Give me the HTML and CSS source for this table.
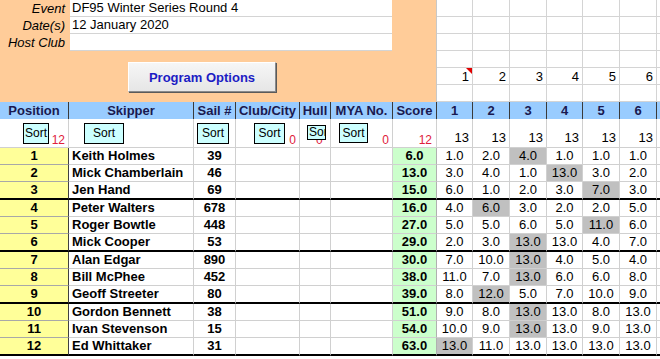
FILE: index.html
```html
<!DOCTYPE html>
<html>
<head>
<meta charset="utf-8">
<link rel="stylesheet" href="styles.css">
</head>
<body>
<div class="sheet">
  <div class="top">
    <div class="info">
      <div class="field"><span class="lbl">Event</span><span class="val">DF95 Winter Series Round 4</span></div>
      <div class="field"><span class="lbl">Date(s)</span><span class="val">12 January 2020</span></div>
      <div class="field"><span class="lbl">Host Club</span><span class="val"></span></div>
      <div class="btnrow"><button class="prog">Program Options</button></div>
    </div>
    <div class="topgrid">
      <div></div><div></div><div></div><div></div><div></div><div></div><div></div>
      <div></div><div></div><div></div><div></div><div></div><div></div><div></div>
      <div></div><div></div><div></div><div></div><div></div><div></div><div></div>
      <div></div><div></div><div></div><div></div><div></div><div></div><div></div>
      <div class="note">1<span class="flag"></span></div><div>2</div><div>3</div><div>4</div><div>5</div><div>6</div><div></div>
      <div></div><div></div><div></div><div></div><div></div><div></div><div></div>
    </div>
  </div>

  <div class="row head">
    <div>Position</div><div>Skipper</div><div>Sail #</div><div>Club/City</div><div>Hull</div><div>MYA No.</div><div>Score</div>
    <div>1</div><div>2</div><div>3</div><div>4</div><div>5</div><div>6</div><div></div>
  </div>

  <div class="row sortrow">
    <div class="pos-s"><button class="sort">Sort</button><span class="cnt">12</span></div>
    <div class="skp-s"><button class="sort">Sort</button></div>
    <div class="sail-s"><button class="sort">Sort</button></div>
    <div class="club-s"><button class="sort">Sort</button><span class="cnt">0</span></div>
    <div class="hull-s"><span class="cnt">0</span><span class="sort hullbtn">Sort</span></div>
    <div class="mya-s"><button class="sort">Sort</button><span class="cnt">0</span></div>
    <div class="score-s"><span class="cnt">12</span></div>
    <div class="tot">13</div><div class="tot">13</div><div class="tot">13</div><div class="tot">13</div><div class="tot">13</div><div class="tot">13</div><div></div>
  </div>

  <div class="row">
    <div class="pos">1</div><div class="name">Keith Holmes</div><div class="sail">39</div><div></div><div></div><div></div><div class="score">6.0</div>
    <div>1.0</div><div>2.0</div><div class="g">4.0</div><div>1.0</div><div>1.0</div><div>1.0</div><div></div>
  </div>
  <div class="row">
    <div class="pos">2</div><div class="name">Mick Chamberlain</div><div class="sail">46</div><div></div><div></div><div></div><div class="score">13.0</div>
    <div>3.0</div><div>4.0</div><div>1.0</div><div class="g">13.0</div><div>3.0</div><div>2.0</div><div></div>
  </div>
  <div class="row thick">
    <div class="pos">3</div><div class="name">Jen Hand</div><div class="sail">69</div><div></div><div></div><div></div><div class="score">15.0</div>
    <div>6.0</div><div>1.0</div><div>2.0</div><div>3.0</div><div class="g">7.0</div><div>3.0</div><div></div>
  </div>
  <div class="row">
    <div class="pos">4</div><div class="name">Peter Walters</div><div class="sail">678</div><div></div><div></div><div></div><div class="score">16.0</div>
    <div>4.0</div><div class="g">6.0</div><div>3.0</div><div>2.0</div><div>2.0</div><div>5.0</div><div></div>
  </div>
  <div class="row">
    <div class="pos">5</div><div class="name">Roger Bowtle</div><div class="sail">448</div><div></div><div></div><div></div><div class="score">27.0</div>
    <div>5.0</div><div>5.0</div><div>6.0</div><div>5.0</div><div class="g">11.0</div><div>6.0</div><div></div>
  </div>
  <div class="row thick">
    <div class="pos">6</div><div class="name">Mick Cooper</div><div class="sail">53</div><div></div><div></div><div></div><div class="score">29.0</div>
    <div>2.0</div><div>3.0</div><div class="g">13.0</div><div>13.0</div><div>4.0</div><div>7.0</div><div></div>
  </div>
  <div class="row">
    <div class="pos">7</div><div class="name">Alan Edgar</div><div class="sail">890</div><div></div><div></div><div></div><div class="score">30.0</div>
    <div>7.0</div><div>10.0</div><div class="g">13.0</div><div>4.0</div><div>5.0</div><div>4.0</div><div></div>
  </div>
  <div class="row">
    <div class="pos">8</div><div class="name">Bill McPhee</div><div class="sail">452</div><div></div><div></div><div></div><div class="score">38.0</div>
    <div>11.0</div><div>7.0</div><div class="g">13.0</div><div>6.0</div><div>6.0</div><div>8.0</div><div></div>
  </div>
  <div class="row thick">
    <div class="pos">9</div><div class="name">Geoff Streeter</div><div class="sail">80</div><div></div><div></div><div></div><div class="score">39.0</div>
    <div>8.0</div><div class="g">12.0</div><div>5.0</div><div>7.0</div><div>10.0</div><div>9.0</div><div></div>
  </div>
  <div class="row">
    <div class="pos">10</div><div class="name">Gordon Bennett</div><div class="sail">38</div><div></div><div></div><div></div><div class="score">51.0</div>
    <div>9.0</div><div>8.0</div><div class="g">13.0</div><div>13.0</div><div>8.0</div><div>13.0</div><div></div>
  </div>
  <div class="row">
    <div class="pos">11</div><div class="name">Ivan Stevenson</div><div class="sail">15</div><div></div><div></div><div></div><div class="score">54.0</div>
    <div>10.0</div><div>9.0</div><div class="g">13.0</div><div>13.0</div><div>9.0</div><div>13.0</div><div></div>
  </div>
  <div class="row thick">
    <div class="pos">12</div><div class="name">Ed Whittaker</div><div class="sail">31</div><div></div><div></div><div></div><div class="score">63.0</div>
    <div class="g">13.0</div><div>11.0</div><div>13.0</div><div>13.0</div><div>13.0</div><div>13.0</div><div></div>
  </div>
</div>
</body>
</html>
```
FILE: styles.css
```css
html, body {
  margin: 0;
  padding: 0;
  background: #fff;
  overflow: hidden;
}
body {
  width: 660px;
  height: 359px;
  font-family: "Liberation Sans", Arial, sans-serif;
  font-size: 13px;
  color: #000;
}
.sheet {
  width: 697px;
}

/* top area */
.top {
  display: flex;
  height: 102px;
}
.info {
  width: 436px;
  background: #FFCC99;
}
.field {
  display: flex;
  height: 17px;
}
.lbl {
  width: 70px;
  box-sizing: border-box;
  padding-right: 5px;
  text-align: right;
  font-style: italic;
  line-height: 17px;
}
.val {
  width: 322px;
  height: 17px;
  box-sizing: border-box;
  background: #fff;
  border-bottom: 1px solid #d4d4d4;
  padding-left: 2px;
  line-height: 16px;
}
.field:last-of-type .val {
  border-bottom: none;
}
.btnrow {
  padding: 11px 0 0 128px;
}
.prog {
  width: 148px;
  height: 30px;
  box-sizing: border-box;
  background: linear-gradient(#f6f6f6, #e6e6e6);
  border: 1px solid;
  border-color: #ffffff #8a8a8a #8a8a8a #ffffff;
  box-shadow: 1px 1px 0 #5a5a5a;
  font-family: "Liberation Sans", Arial, sans-serif;
  font-size: 13px;
  font-weight: bold;
  color: #1c1cc4;
  padding: 0;
}

.topgrid {
  display: grid;
  grid-template-columns: 36px 37px 37px 36px 37px 37px 40px;
  grid-auto-rows: 17px;
  border-left: 1px solid #c8c8c8;
}
.topgrid > div {
  box-sizing: border-box;
  border-right: 1px solid #d4d4d4;
  border-bottom: 1px solid #d4d4d4;
  text-align: right;
  padding-right: 3px;
  line-height: 17px;
}
.note {
  position: relative;
}
.flag {
  position: absolute;
  top: 0;
  right: 0;
  width: 0;
  height: 0;
  border-top: 6px solid #e00000;
  border-left: 6px solid transparent;
}

/* table rows */
.row {
  display: grid;
  grid-template-columns: 69px 125px 42px 64px 31px 62px 44px 36px 37px 37px 36px 37px 37px 40px;
  height: 17px;
}
.row > div {
  box-sizing: border-box;
  border-right: 1px solid #d0d0d0;
  border-bottom: 1px solid #d0d0d0;
  overflow: hidden;
  white-space: nowrap;
  text-align: center;
  line-height: 16px;
}
.row.thick {
  height: 18px;
}
.row.thick > div {
  border-bottom: 2px solid #000;
}

.head {
  background: #99CCFF;
}
.head > div {
  border-right: 1px solid #3a3a3a;
  border-bottom: none;
  color: #191950;
  font-weight: bold;
  line-height: 17px;
}

.sortrow {
  height: 29px;
}
.row.sortrow > div {
  display: flex;
  align-items: center;
  line-height: 12px;
}
.sort {
  flex-shrink: 0;
  height: 21px;
  box-sizing: border-box;
  background: #CCFFFF;
  border: 1px solid #000;
  padding: 0;
  font-family: "Liberation Sans", Arial, sans-serif;
  font-size: 12px;
  color: #000;
  overflow: hidden;
  white-space: nowrap;
}
.cnt {
  flex-shrink: 0;
  margin-left: auto;
  align-self: flex-end;
  padding: 0 3px 1px 0;
  color: #e0203a;
  font-size: 12px;
  line-height: 12px;
}
.pos-s .sort { margin-left: 23px; width: 26px; }
.skp-s .sort { margin-left: 15px; width: 40px; }
.sail-s .sort { margin-left: 3px; width: 32px; }
.club-s .sort { margin-left: 18px; width: 31px; }
.hull-s .cnt { order: 2; margin-left: -10px; padding-right: 0; }
.hullbtn {
  order: 1;
  display: block;
  position: relative;
  z-index: 1;
  margin-left: 7px;
  width: 19px;
  height: 15px;
  align-self: flex-start;
  margin-top: 6px;
  text-align: left;
  padding-left: 1px;
  line-height: 13px;
}
.mya-s .sort { margin-left: 8px; width: 29px; height: 20px; }
.score-s .cnt { padding-right: 4px; }
.row.sortrow > div.tot {
  justify-content: flex-end;
  align-items: flex-end;
  padding: 0 3px 2px 0;
  font-size: 13px;
  line-height: 15px;
}

.pos {
  background: #FFFF99;
  font-weight: bold;
}
.row > div.pos {
  border-right: 1px solid #404040;
  border-bottom-color: #a8a8a8;
}
.row.thick > div.pos {
  border-bottom-color: #000;
}
.row > div.name {
  text-align: left;
  padding-left: 3px;
  font-weight: bold;
}
.sail {
  font-weight: bold;
}
.score {
  background: #CCFFCC;
  font-weight: bold;
}
.row > div.score {
  border-right-color: #b0b0b0;
}
.g {
  background: #C0C0C0;
}
```
